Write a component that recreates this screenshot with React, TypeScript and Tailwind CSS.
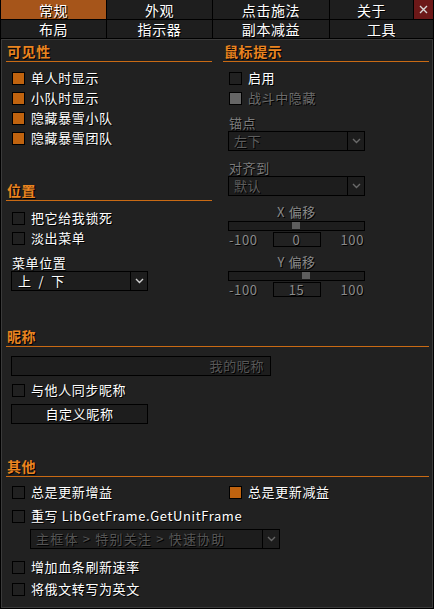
import React from "react";

const shadow = "[text-shadow:1px_1px_0_#000]";

function Check({
  label,
  checked,
  disabled,
  className = "",
}: {
  label: React.ReactNode;
  checked?: boolean;
  disabled?: boolean;
  className?: string;
}) {
  return (
    <div className={`flex h-5 items-center gap-[6px] pl-[6px] ${className}`}>
      <div
        className={`h-[13px] w-[13px] shrink-0 border border-black ${
          checked ? "bg-[#c0630f]" : disabled ? "bg-[#666666]" : "bg-transparent"
        }`}
      />
      <span className={`${disabled ? "text-[#6c6c6c]" : "text-white"} ${shadow} whitespace-nowrap`}>
        {label}
      </span>
    </div>
  );
}

function Header({ title }: { title: string }) {
  return (
    <div
      className={`border-b border-[#c96a14] pb-[2px] pl-px pt-[3px] text-[14px] font-bold leading-4 tracking-[0.6px] text-[#ea8420] ${shadow}`}
    >
      {title}
    </div>
  );
}

function Chevron({ color }: { color: string }) {
  return (
    <svg width="9" height="6" viewBox="0 0 9 6">
      <path d="M1 1 L4.5 4.5 L8 1" fill="none" stroke={color} strokeWidth="1.4" />
    </svg>
  );
}

function Dropdown({
  value,
  textClass,
  chevron,
  className = "",
}: {
  value: string;
  textClass: string;
  chevron: string;
  className?: string;
}) {
  return (
    <div className={`flex h-5 border border-black bg-[#1d1d1d] ${className}`}>
      <div className={`flex flex-1 items-center whitespace-pre ${textClass} ${shadow}`}>{value}</div>
      <div className="flex w-[17px] items-center justify-center border-l border-black">
        <Chevron color={chevron} />
      </div>
    </div>
  );
}

function Slider({ label, value, pos }: { label: string; value: string; pos: number }) {
  return (
    <div className="ml-[5px] w-[137px]">
      <div className={`h-4 text-center leading-4 text-[#8a8a8a] ${shadow}`}>{label}</div>
      <div className="relative mt-px h-[10px] border border-black bg-[#1d1d1d]">
        <div className="absolute top-0 h-[7px] w-[8px] bg-[#5e5e5e]" style={{ left: pos }} />
      </div>
      <div className="mt-px flex h-[15px] items-center text-[#8a8a8a]">
        <span className={`flex-1 pl-px leading-4 ${shadow}`}>-100</span>
        <div className={`flex h-[15px] w-[48px] items-center justify-center border border-black leading-4 ${shadow}`}>
          {value}
        </div>
        <span className={`flex-1 pr-px text-right leading-4 ${shadow}`}>100</span>
      </div>
    </div>
  );
}

function Tab({ label, active, className = "" }: { label: string; active?: boolean; className?: string }) {
  return (
    <div
      className={`flex items-center justify-center text-[14px] leading-4 text-white ${shadow} ${
        active ? "bg-[#a6551a]" : "bg-[#1e1e1e]"
      } ${className}`}
    >
      {label}
    </div>
  );
}

export default function App() {
  return (
    <div className="h-[609px] w-[434px] overflow-hidden bg-black px-px font-['Noto_Sans_CJK_SC','Noto_Sans',sans-serif] text-[13px] leading-4 tracking-[0.6px]">
      <div className="grid grid-cols-[105px_105px_116px_1fr] grid-rows-[19px_18px] gap-px">
        <Tab label="常规" active />
        <Tab label="外观" />
        <Tab label="点击施法" />
        <div className="flex gap-px">
          <Tab label="关于" className="flex-1" />
          <div className="flex w-[19px] items-center justify-center bg-[#6c1818]">
            <svg width="9" height="9" viewBox="0 0 9 9">
              <path d="M1 1 L8 8 M8 1 L1 8" stroke="#d8d8d8" strokeWidth="1.4" />
            </svg>
          </div>
        </div>
        <Tab label="布局" />
        <Tab label="指示器" />
        <Tab label="副本减益" />
        <Tab label="工具" />
      </div>

      <div className="mt-px h-[569px] border border-[#3a3a3a] bg-[#212121] pl-[4px] pr-[3px]">
        <div className="grid grid-cols-[206px_206px] gap-x-[11px]">
          {/* left column */}
          <div className="flex flex-col">
            <Header title="可见性" />
            <div className="mt-[6px] flex flex-col">
              <Check label="单人时显示" checked />
              <Check label="小队时显示" checked />
              <Check label="隐藏暴雪小队" checked />
              <Check label="隐藏暴雪团队" checked />
            </div>
            <div className="mt-[31px]">
              <Header title="位置" />
            </div>
            <div className="mt-[7px] flex flex-col">
              <Check label="把它给我锁死" />
              <Check label="淡出菜单" />
            </div>
            <div className={`mt-[7px] h-4 pl-[6px] text-white ${shadow}`}>菜单位置</div>
            <Dropdown
              value="上  /  下"
              textClass="pl-[6px] text-white"
              chevron="#d0d0d0"
              className="ml-[5px] w-[137px]"
            />
          </div>

          {/* right column */}
          <div className="flex flex-col">
            <Header title="鼠标提示" />
            <div className="mt-[6px] flex flex-col">
              <Check label="启用" />
              <Check label="战斗中隐藏" disabled />
            </div>
            <div className={`mt-[7px] h-4 pl-[6px] text-[#7c7c7c] ${shadow}`}>锚点</div>
            <Dropdown value="左下" textClass="pl-[5px] text-[#5e5e5e]" chevron="#6a6a6a" className="ml-[5px] w-[137px]" />
            <div className={`mt-[9px] h-4 pl-[6px] text-[#7c7c7c] ${shadow}`}>对齐到</div>
            <Dropdown value="默认" textClass="pl-[5px] text-[#5e5e5e]" chevron="#6a6a6a" className="ml-[5px] w-[137px]" />
            <div className="mt-[8px]">
              <Slider label="X 偏移" value="0" pos={63} />
            </div>
            <div className="mt-[7px]">
              <Slider label="Y 偏移" value="15" pos={73} />
            </div>
          </div>
        </div>

        <div className="mt-[28px]">
          <Header title="昵称" />
        </div>
        <div className="ml-[5px] mt-[9px] flex h-5 w-[260px] items-center justify-end border border-black bg-[#1d1d1d] pr-[6px]">
          <span className={`text-[#575757] ${shadow}`}>我的昵称</span>
        </div>
        <div className="mt-[4px]">
          <Check label="与他人同步昵称" />
        </div>
        <div
          className={`ml-[5px] mt-[4px] flex h-5 w-[137px] items-center justify-center border border-black bg-[#1d1d1d] text-white ${shadow}`}
        >
          自定义昵称
        </div>

        <div className="mt-[31px]">
          <Header title="其他" />
        </div>
        <div className="mt-[5px] grid grid-cols-[206px_206px] gap-x-[11px]">
          <Check label="总是更新增益" />
          <Check label="总是更新减益" checked />
        </div>
        <div className="mt-[4px]">
          <Check label="重写 LibGetFrame.GetUnitFrame" />
        </div>
        <Dropdown
          value="主框体 > 特别关注 > 快速协助"
          textClass="pl-[5px] tracking-[1.2px] text-[#555555]"
          chevron="#666666"
          className="ml-[24px] mt-[3px] w-[250px]"
        />
        <div className="mt-[8px]">
          <Check label="增加血条刷新速率" />
        </div>
        <div className="mt-[2px]">
          <Check label="将俄文转写为英文" />
        </div>
      </div>
    </div>
  );
}
